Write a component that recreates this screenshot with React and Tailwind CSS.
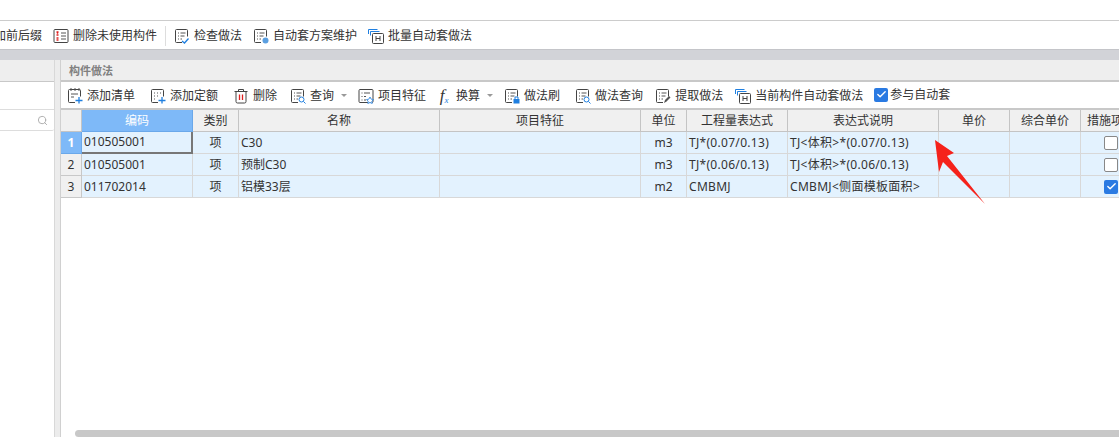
import React from 'react';
import { Search, Check } from 'lucide-react';

const Doc = ({ children, lines = true }) => (
    <svg width="16" height="16" viewBox="0 0 16 16" fill="none" className="shrink-0">
        <path d="M1.5 2.5 a1 1 0 0 1 1-1 h10 a1 1 0 0 1 1 1 v6 M8 14.5 h-5.5 a1 1 0 0 1-1-1 v-11" stroke="#444" />
        {lines && <path d="M4 5h1M6.5 5h5M4 8h1M6.5 8h4M4 11h1M6.5 11h1.5" stroke="#555" />}
        {children}
    </svg>
);

const blue = '#1f7fe0';

const icons = {
    del: (
        <svg width="16" height="16" viewBox="0 0 16 16" fill="none" className="shrink-0">
            <rect x="1" y="1.5" width="14" height="13" rx="1" stroke="#444" />
            <path d="M3.5 4h2M3.5 7h2M3.5 10h2M3.5 12h2M4 4.5l1 1M5 4.5l-1 1" stroke="#e02020" strokeWidth="1.5" />
            <path d="M8 5h5M8 8h5M8 11h5" stroke="#555" />
        </svg>
    ),
    check: <Doc><path d="M8 13l2.5 2 4-4.5" stroke={blue} strokeWidth="1.3" /></Doc>,
    gear: <Doc><circle cx="12.5" cy="12.5" r="3" fill="#5b9fe0" /></Doc>,
    auto: (
        <svg width="16" height="16" viewBox="0 0 16 16" fill="none" className="shrink-0">
            <path d="M0.5 6V1.5h9M2.5 7.5V3.5h9" stroke={blue} />
            <rect x="4.5" y="5.5" width="11" height="10" rx="1" stroke="#444" />
            <path d="M8 8v5M12 8v5M8 10.5h4" stroke="#444" />
        </svg>
    ),
    addList: <Doc lines={false}><path d="M4 0v3M8 0v3M12 0v3M4 6h7M4 9h3" stroke="#555" /><path d="M12 9v6.5M8.5 12.5h7" stroke={blue} strokeWidth="1.3" /></Doc>,
    addQuota: <Doc lines={false}><path d="M4 5h1M7 5h1M10 5h1M4 8h1M7 8h1M4 11h1" stroke="#555" /><path d="M12 9v6.5M8.5 12.5h7" stroke={blue} strokeWidth="1.3" /></Doc>,
    trash: (
        <svg width="16" height="16" viewBox="0 0 16 16" fill="none" className="shrink-0">
            <path d="M1.5 3.5h13M5.5 3.5v-2h5v2M3 3.5v10a1.5 1.5 0 0 0 1.5 1.5h7a1.5 1.5 0 0 0 1.5-1.5v-10" stroke="#444" />
            <path d="M6.5 6.5v5.5M9.5 6.5v5.5" stroke="#e02020" strokeWidth="1.3" />
        </svg>
    ),
    query: <Doc><circle cx="11.5" cy="11.5" r="2.5" stroke={blue} /><path d="M13.5 13.5l2 2" stroke={blue} /></Doc>,
    feature: (
        <svg width="16" height="16" viewBox="0 0 16 16" fill="none" className="shrink-0">
            <rect x="1" y="1.5" width="14" height="13" rx="1" stroke="#444" />
            <path d="M3.5 5h1M6 5h6M3.5 8.5h1M6 8.5h2M3.5 12h1M6 12h2" stroke="#555" />
            <path d="M12 9l1.2 2.2 2.3.4-1.7 1.6.4 2.3-2.2-1-2.2 1 .4-2.3-1.7-1.6 2.3-.4z" fill="#fff" stroke={blue} strokeWidth="0.8" />
        </svg>
    ),
    brush: <Doc><rect x="9.5" y="11" width="6" height="4.5" fill={blue} /><path d="M11 11V9h3v2" stroke={blue} /></Doc>,
    pick: <Doc><path d="M9 15l1-3 4-4 1.5 1.5-4 4z" fill="#555" /></Doc>,
};

const Fx = () => (
    <span className="w-[16px] shrink-0 text-center font-['Liberation_Serif',serif] italic text-[17px] leading-none text-[#333]">
        f<sub className="text-[9px] text-[#1f7fe0]">x</sub>
    </span>
);

const Tool = ({ icon, label, caret, gap = 'mr-[15px]' }) => (
    <div className={`flex items-center gap-[4px] shrink-0 ${gap}`}>
        {icon}
        <span className="whitespace-nowrap">{label}</span>
        {caret && <span className="ml-[3px] w-0 h-0 border-x-[3px] border-x-transparent border-t-[3px] border-t-[#999]" />}
    </div>
);

const CheckBox = ({ on, size = 'w-[14px] h-[14px]' }) => (
    <span className={`${size} rounded-[2px] flex items-center justify-center shrink-0 ${on ? 'bg-[#2a7ae2]' : 'bg-white border border-[#888]'}`}>
        {on && <Check size={11} strokeWidth={3} color="#fff" />}
    </span>
);

const columns = 'grid grid-cols-[21px_111px_46px_201px_201px_46px_101px_151px_71px_71px_49px]';

const headers = ['', '编码', '类别', '名称', '项目特征', '单位', '工程量表达式', '表达式说明', '单价', '综合单价', '措施项'];

const rows = [
    { code: '010505001', name: 'C30', unit: 'm3', expr: 'TJ*(0.07/0.13)', desc: 'TJ<体积>*(0.07/0.13)', on: false },
    { code: '010505001', name: '预制C30', unit: 'm3', expr: 'TJ*(0.06/0.13)', desc: 'TJ<体积>*(0.06/0.13)', on: false },
    { code: '011702014', name: '铝模33层', unit: 'm2', expr: 'CMBMJ', desc: 'CMBMJ<侧面模板面积>', on: true },
];

const cell = 'h-[22px] flex items-center border-r border-b border-[#d8d8d8] bg-[#e3f2fe] overflow-hidden whitespace-nowrap';

export default function App() {
    return (
        <div className="relative w-[1119px] h-[437px] overflow-hidden bg-white flex flex-col text-[12px] text-[#333] font-['Noto_Sans','Noto_Sans_CJK_SC',sans-serif]">
            <div className="h-[21px] shrink-0 border-b border-[#cccccc]" />

            {/* main toolbar */}
            <div className="h-[28px] shrink-0 flex items-center pt-[2px] overflow-hidden">
                <span className="ml-[-6px] mr-[11px] whitespace-nowrap">加前后缀</span>
                <Tool icon={icons.del} label="删除未使用构件" gap="mr-[8px]" />
                <div className="w-px h-[20px] bg-[#dddddd] mr-[8px]" />
                <Tool icon={icons.check} label="检查做法" gap="mr-[11px]" />
                <Tool icon={icons.gear} label="自动套方案维护" gap="mr-[11px]" />
                <Tool icon={icons.auto} label="批量自动套做法" />
            </div>

            <div className="h-[11px] shrink-0 border-t border-[#c4c5c9] bg-[#d2d3d8]" />

            <div className="flex-1 flex min-h-0">
                {/* left panel */}
                <div className="w-[55px] shrink-0 flex flex-col border-r border-[#d8d8d8]">
                    <div className="h-[22px] bg-[#eeeeee] border-b border-[#c8c8c8]" />
                    <div className="h-[28px] border-b border-[#dddddd]" />
                    <div className="h-[21px] border-b border-[#dddddd] rounded-br-[2px] flex items-center justify-end pr-[6px]">
                        <Search size={11} color="#aaaaaa" />
                    </div>
                </div>
                <div className="w-[5px] shrink-0 bg-[#ececec]" />

                {/* right panel */}
                <div className="flex-1 min-w-0 flex flex-col border-l border-[#d0d0d0]">
                    <div className="h-[22px] shrink-0 bg-[#eeeeee] border-b-2 border-[#c8c8c8] flex items-center pl-[8px] pt-[2px] font-bold text-[#808080] text-[11px]">
                        构件做法
                    </div>
                    <div className="h-[28px] shrink-0 flex items-center pl-[6px] pt-[1px] border-b-2 border-[#c8c8c8] overflow-hidden">
                        <Tool icon={icons.addList} label="添加清单" />
                        <Tool icon={icons.addQuota} label="添加定额" />
                        <Tool icon={icons.trash} label="删除" gap="mr-[13px]" />
                        <Tool icon={icons.query} label="查询" caret gap="mr-[11px]" />
                        <Tool icon={icons.feature} label="项目特征" gap="mr-[10px]" />
                        <Tool icon={<Fx />} label="换算" caret gap="mr-[11px]" />
                        <Tool icon={icons.brush} label="做法刷" />
                        <Tool icon={icons.query} label="做法查询" gap="mr-[12px]" />
                        <Tool icon={icons.pick} label="提取做法" gap="mr-[12px]" />
                        <Tool icon={icons.auto} label="当前构件自动套做法" gap="mr-[11px]" />
                        <div className="flex items-center gap-[2px] shrink-0 -translate-y-[1px]">
                            <CheckBox on />
                            <span className="whitespace-nowrap">参与自动套</span>
                        </div>
                    </div>

                    {/* grid */}
                    <div className={`${columns} w-[1068px] shrink-0`}>
                        {headers.map((h, i) => (
                            <div
                                key={i}
                                className={`h-[22px] flex items-center justify-center border-r border-b whitespace-nowrap overflow-hidden ${i === 1 ? 'bg-[#7eb9f8] text-white border-[#6aa8ea]' : 'bg-[#f0f0f0] border-[#c4c4c4]'}`}
                            >
                                {h}
                            </div>
                        ))}
                        {rows.map((r, i) => (
                            <React.Fragment key={i}>
                                <div className={`h-[22px] flex items-center justify-center border-r border-b ${i === 0 ? 'bg-[#7eb9f8] border-[#6aa8ea] text-white font-bold' : 'bg-[#f0f0f0] border-[#c8c8c8]'}`}>
                                    {i + 1}
                                </div>
                                <div className={`${cell} pl-[2px] ${i === 0 ? 'border-r-2 border-b-2 border-r-[#777777] border-b-[#777777]' : ''}`}>{r.code}</div>
                                <div className={`${cell} justify-center`}>项</div>
                                <div className={`${cell} pl-[2px]`}>{r.name}</div>
                                <div className={cell} />
                                <div className={`${cell} justify-center`}>{r.unit}</div>
                                <div className={`${cell} pl-[2px] tracking-[0.3px]`}>{r.expr}</div>
                                <div className={`${cell} pl-[2px] tracking-[0.3px]`}>{r.desc}</div>
                                <div className={cell} />
                                <div className={cell} />
                                <div className={`${cell} justify-start pl-[23px]`}><CheckBox on={r.on} /></div>
                            </React.Fragment>
                        ))}
                    </div>

                    <div className="flex-1" />
                    <div className="h-[7px] shrink-0 ml-[14px] rounded-l-[4px] bg-[#c8c8c8]" />
                </div>
            </div>

            {/* annotation arrow */}
            <svg width="60" height="70" viewBox="0 0 60 70" className="absolute left-[930px] top-[138px]">
                <path d="M5 2 L24 15 L17 18 L55 66 L13 24 L9 34 Z" fill="#f5221b" />
            </svg>
        </div>
    );
}
